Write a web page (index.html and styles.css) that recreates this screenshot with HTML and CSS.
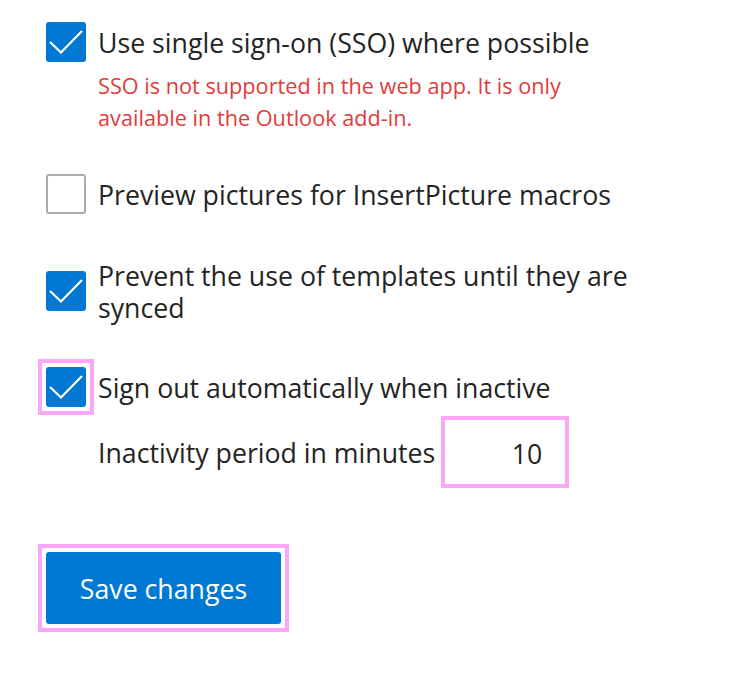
FILE: index.html
```html
<!DOCTYPE html>
<html lang="en">
<head>
<meta charset="utf-8">
<title>Settings</title>
<link rel="stylesheet" href="styles.css">
</head>
<body>
<main class="settings">
  <div class="row row-sso">
    <span class="box checked">
      <svg viewBox="0 0 40 40" width="40" height="40"><polyline points="4,20 15,30.5 36,9" fill="none" stroke="#fff" stroke-width="2.2"/></svg>
    </span>
    <span class="label">Use single sign-on (SSO) where possible</span>
  </div>
  <p class="error">SSO is not supported in the web app. It is only available in the Outlook add-in.</p>

  <div class="row row-preview">
    <span class="box"></span>
    <span class="label">Preview pictures for InsertPicture macros</span>
  </div>

  <div class="row row-templates">
    <span class="box checked">
      <svg viewBox="0 0 40 40" width="40" height="40"><polyline points="4,20 15,30.5 36,9" fill="none" stroke="#fff" stroke-width="2.2"/></svg>
    </span>
    <span class="label">Prevent the use of templates until they are synced</span>
  </div>

  <div class="row row-signout">
    <span class="focus">
      <span class="box checked">
        <svg viewBox="0 0 40 40" width="40" height="40"><polyline points="4,20 15,30.5 36,9" fill="none" stroke="#fff" stroke-width="2.2"/></svg>
      </span>
    </span>
    <span class="label">Sign out automatically when inactive</span>
  </div>

  <div class="inactivity">
    <span class="label">Inactivity period in minutes</span>
    <span class="focus"><span class="num">10</span></span>
  </div>

  <div class="actions">
    <span class="focus"><button class="save" type="button">Save changes</button></span>
  </div>
</main>
</body>
</html>
```

FILE: styles.css
```css
html, body {
  margin: 0;
  padding: 0;
  background: #ffffff;
}
body {
  font-family: "Open Sans", "Noto Sans", sans-serif;
  color: #242424;
}
.settings {
  padding: 22px 0 40px 46px;
}
.row {
  display: flex;
  align-items: center;
  gap: 12px;
}
.label {
  font-size: 26.7px;
  line-height: 32px;
  width: 545px;
  padding-top: 2px;
}
.box {
  flex: 0 0 auto;
  width: 40px;
  height: 40px;
  box-sizing: border-box;
  border: 2px solid #ababab;
  border-radius: 3px;
  display: flex;
  align-items: center;
  justify-content: center;
  background: #fff;
}
.box svg { display: block; }
.box.checked {
  border: none;
  background: #0078d4;
}
.focus {
  display: inline-flex;
  flex: 0 0 auto;
  outline: 4px solid #faa8f6;
  outline-offset: 4px;
}
.error {
  margin: 8px 0 0 52px;
  width: 500px;
  color: #e23b3b;
  font-size: 21.7px;
  line-height: 32px;
}
.row-preview { margin-top: 40px; }
.row-templates { margin-top: 44px; }
.row-signout { margin-top: 43px; }
.inactivity {
  display: flex;
  align-items: center;
  gap: 14px;
  margin: 17px 0 0 52px;
}
.inactivity .label {
  width: auto;
}
.num {
  width: 112px;
  height: 56px;
  box-sizing: border-box;
  padding-right: 19px;
  padding-top: 2px;
  display: flex;
  align-items: center;
  justify-content: flex-end;
  font-size: 26.7px;
}
.actions {
  display: flex;
  margin-top: 72px;
}
.save {
  display: block;
  width: 235px;
  height: 72px;
  border: none;
  border-radius: 3px;
  background: #0078d4;
  color: #fff;
  font-family: "Open Sans", "Noto Sans", sans-serif;
  font-size: 26.7px;
  padding: 0;
}
```
